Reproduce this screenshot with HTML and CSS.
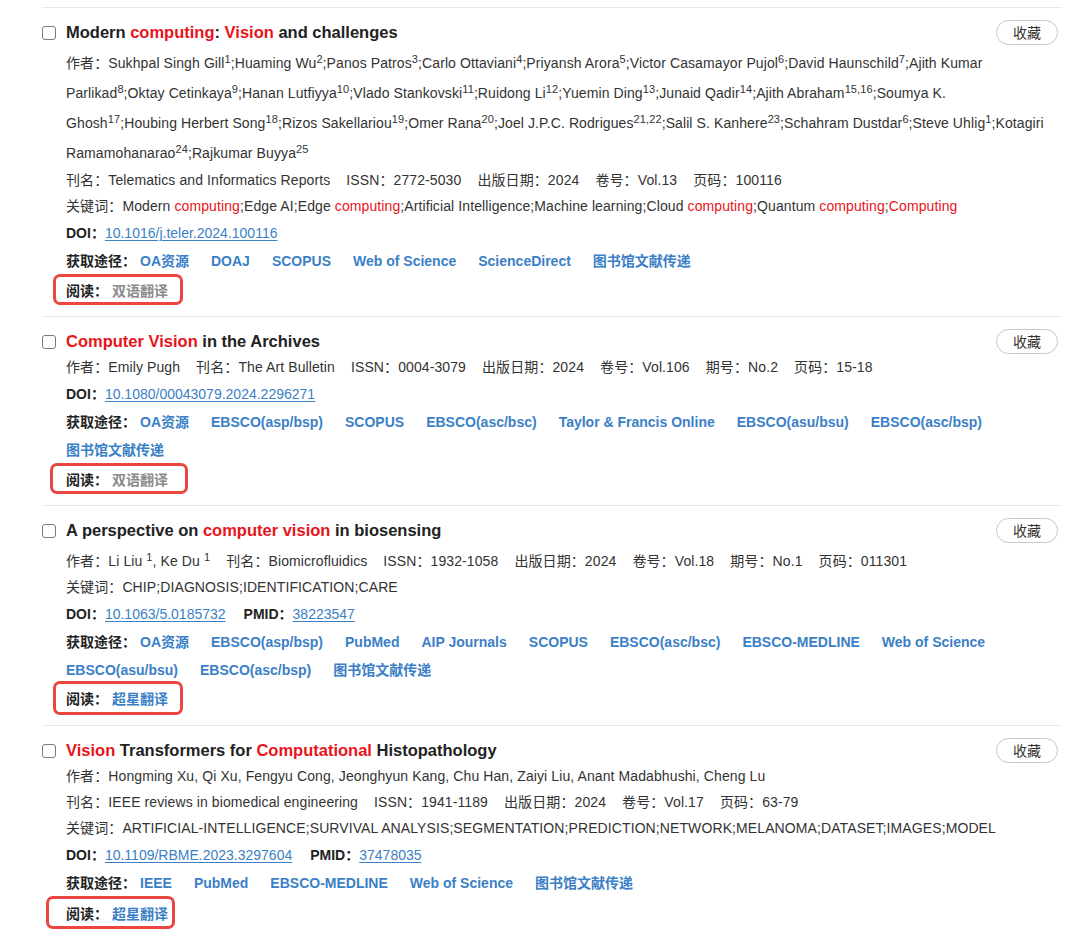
FILE: index.html
```html
<!DOCTYPE html>
<html lang="zh-CN">
<head>
<meta charset="utf-8">
<title>检索结果</title>
<link rel="stylesheet" href="styles.css">
</head>
<body>
<div class="results">

  <div class="record">
    <div class="head">
      <input type="checkbox" class="pick">
      <h3 class="title">Modern <em>computing</em>: <em>Vision</em> and challenges</h3>
      <button class="fav">收藏</button>
    </div>
    <div class="body">
      <p class="authors">作者：Sukhpal Singh Gill<sup>1</sup>;Huaming Wu<sup>2</sup>;Panos Patros<sup>3</sup>;Carlo Ottaviani<sup>4</sup>;Priyansh Arora<sup>5</sup>;Victor Casamayor Pujol<sup>6</sup>;David Haunschild<sup>7</sup>;Ajith Kumar Parlikad<sup>8</sup>;Oktay Cetinkaya<sup>9</sup>;Hanan Lutfiyya<sup>10</sup>;Vlado Stankovski<sup>11</sup>;Ruidong Li<sup>12</sup>;Yuemin Ding<sup>13</sup>;Junaid Qadir<sup>14</sup>;Ajith Abraham<sup>15,16</sup>;Soumya K. Ghosh<sup>17</sup>;Houbing Herbert Song<sup>18</sup>;Rizos Sakellariou<sup>19</sup>;Omer Rana<sup>20</sup>;Joel J.P.C. Rodrigues<sup>21,22</sup>;Salil S. Kanhere<sup>23</sup>;Schahram Dustdar<sup>6</sup>;Steve Uhlig<sup>1</sup>;Kotagiri Ramamohanarao<sup>24</sup>;Rajkumar Buyya<sup>25</sup></p>
      <div class="meta">
        <span>刊名：Telematics and Informatics Reports</span>
        <span>ISSN：2772-5030</span>
        <span>出版日期：2024</span>
        <span>卷号：Vol.13</span>
        <span>页码：100116</span>
      </div>
      <p class="line">关键词：Modern <em>computing</em>;Edge AI;Edge <em>computing</em>;Artificial Intelligence;Machine learning;Cloud <em>computing</em>;Quantum <em>computing</em>;<em>Computing</em></p>
      <div class="ids">
        <span class="id"><b>DOI：</b><a href="#">10.1016/j.teler.2024.100116</a></span>
      </div>
      <div class="sources">
        <b class="lbl">获取途径：</b>
        <a href="#">OA资源</a>
        <a href="#">DOAJ</a>
        <a href="#">SCOPUS</a>
        <a href="#">Web of Science</a>
        <a href="#">ScienceDirect</a>
        <a href="#">图书馆文献传递</a>
      </div>
      <div class="read mark-1"><b>阅读：</b><span class="off">双语翻译</span></div>
    </div>
  </div>

  <div class="record">
    <div class="head">
      <input type="checkbox" class="pick">
      <h3 class="title"><em>Computer Vision</em> in the Archives</h3>
      <button class="fav">收藏</button>
    </div>
    <div class="body">
      <div class="meta">
        <span>作者：Emily Pugh</span>
        <span>刊名：The Art Bulletin</span>
        <span>ISSN：0004-3079</span>
        <span>出版日期：2024</span>
        <span>卷号：Vol.106</span>
        <span>期号：No.2</span>
        <span>页码：15-18</span>
      </div>
      <div class="ids">
        <span class="id"><b>DOI：</b><a href="#">10.1080/00043079.2024.2296271</a></span>
      </div>
      <div class="sources">
        <b class="lbl">获取途径：</b>
        <a href="#">OA资源</a>
        <a href="#">EBSCO(asp/bsp)</a>
        <a href="#">SCOPUS</a>
        <a href="#">EBSCO(asc/bsc)</a>
        <a href="#">Taylor &amp; Francis Online</a>
        <a href="#">EBSCO(asu/bsu)</a>
        <a href="#">EBSCO(asc/bsp)</a>
        <a href="#">图书馆文献传递</a>
      </div>
      <div class="read mark-2"><b>阅读：</b><span class="off">双语翻译</span></div>
    </div>
  </div>

  <div class="record">
    <div class="head">
      <input type="checkbox" class="pick">
      <h3 class="title">A perspective on <em>computer vision</em> in biosensing</h3>
      <button class="fav">收藏</button>
    </div>
    <div class="body">
      <div class="meta with-sup">
        <span>作者：Li Liu <sup>1</sup>, Ke Du <sup>1</sup></span>
        <span>刊名：Biomicrofluidics</span>
        <span>ISSN：1932-1058</span>
        <span>出版日期：2024</span>
        <span>卷号：Vol.18</span>
        <span>期号：No.1</span>
        <span>页码：011301</span>
      </div>
      <p class="line">关键词：CHIP;DIAGNOSIS;IDENTIFICATION;CARE</p>
      <div class="ids">
        <span class="id"><b>DOI：</b><a href="#">10.1063/5.0185732</a></span>
        <span class="id"><b>PMID：</b><a href="#">38223547</a></span>
      </div>
      <div class="sources">
        <b class="lbl">获取途径：</b>
        <a href="#">OA资源</a>
        <a href="#">EBSCO(asp/bsp)</a>
        <a href="#">PubMed</a>
        <a href="#">AIP Journals</a>
        <a href="#">SCOPUS</a>
        <a href="#">EBSCO(asc/bsc)</a>
        <a href="#">EBSCO-MEDLINE</a>
        <a href="#">Web of Science</a>
        <a href="#">EBSCO(asu/bsu)</a>
        <a href="#">EBSCO(asc/bsp)</a>
        <a href="#">图书馆文献传递</a>
      </div>
      <div class="read mark-3"><b>阅读：</b><a href="#">超星翻译</a></div>
    </div>
  </div>

  <div class="record">
    <div class="head">
      <input type="checkbox" class="pick">
      <h3 class="title"><em>Vision</em> Transformers for <em>Computational</em> Histopathology</h3>
      <button class="fav">收藏</button>
    </div>
    <div class="body">
      <p class="line">作者：Hongming Xu, Qi Xu, Fengyu Cong, Jeonghyun Kang, Chu Han, Zaiyi Liu, Anant Madabhushi, Cheng Lu</p>
      <div class="meta">
        <span>刊名：IEEE reviews in biomedical engineering</span>
        <span>ISSN：1941-1189</span>
        <span>出版日期：2024</span>
        <span>卷号：Vol.17</span>
        <span>页码：63-79</span>
      </div>
      <p class="line">关键词：ARTIFICIAL-INTELLIGENCE;SURVIVAL ANALYSIS;SEGMENTATION;PREDICTION;NETWORK;MELANOMA;DATASET;IMAGES;MODEL</p>
      <div class="ids">
        <span class="id"><b>DOI：</b><a href="#">10.1109/RBME.2023.3297604</a></span>
        <span class="id"><b>PMID：</b><a href="#">37478035</a></span>
      </div>
      <div class="sources">
        <b class="lbl">获取途径：</b>
        <a href="#">IEEE</a>
        <a href="#">PubMed</a>
        <a href="#">EBSCO-MEDLINE</a>
        <a href="#">Web of Science</a>
        <a href="#">图书馆文献传递</a>
      </div>
      <div class="read mark-4"><b>阅读：</b><a href="#">超星翻译</a></div>
    </div>
  </div>

</div>
</body>
</html>
```

FILE: styles.css
```css
* { box-sizing: border-box; }

html, body {
  margin: 0;
  background: #fff;
}

body {
  font-family: "Liberation Sans", "Noto Sans CJK SC", sans-serif;
  font-size: 14px;
  color: #333;
}

.results {
  padding: 7px 18px 0 42px;
}

.record {
  border-top: 1px solid #e8e8e8;
  padding: 11px 0 13px;
}

/* title row: checkbox, title, favourite button */
.head {
  display: flex;
  align-items: center;
  height: 26px;
  padding-right: 4px;
}

.pick {
  appearance: none;
  -webkit-appearance: none;
  width: 14px;
  height: 14px;
  margin: 1px 10px 0 0;
  border: 1px solid #7a7a7a;
  border-radius: 3px;
  background: #fff;
  flex: none;
}

.title {
  margin: 0;
  flex: 1;
  font-size: 16.5px;
  font-weight: bold;
  color: #222;
  line-height: 26px;
}

.title em,
.line em {
  font-style: normal;
  color: #e8141a;
}

.fav {
  flex: none;
  width: 62px;
  height: 25px;
  border: 1px solid #c8c8c8;
  border-radius: 13px;
  background: #fff;
  font-family: inherit;
  font-size: 14px;
  color: #333;
  padding: 0;
}

.body {
  padding: 0 10px 0 24px;
}

sup {
  font-size: 11px;
  line-height: 0;
  vertical-align: baseline;
  position: relative;
  top: -0.5em;
}

/* long author list, wrapped over several lines */
.authors {
  margin: 0 0 -1px;
  padding-top: 3px;
  line-height: 30px;
  letter-spacing: 0.1px;
}

.line {
  margin: 0;
  line-height: 26px;
  letter-spacing: 0.1px;
}

.meta {
  display: flex;
  flex-wrap: wrap;
  column-gap: 16px;
  line-height: 26px;
  letter-spacing: 0.1px;
}

.meta.with-sup {
  padding-top: 5px;
}

.ids {
  display: flex;
  column-gap: 18px;
  line-height: 28px;
}

.ids b,
.sources .lbl,
.read b {
  color: #222;
  font-weight: bold;
}

.ids a {
  color: #3b7fc6;
  text-decoration: underline;
  text-underline-offset: 2px;
}

.sources {
  display: flex;
  flex-wrap: wrap;
  line-height: 28px;
}

.sources .lbl {
  margin-right: 4px;
}

.sources a {
  color: #3b7fc6;
  font-weight: bold;
  text-decoration: none;
  margin-right: 22px;
}

/* reading row, framed in red */
.read {
  display: flex;
  align-items: center;
  width: fit-content;
  height: 31px;
  border: 3px solid #e8463e;
  border-radius: 7px;
  margin: -1px 0 -2px -13px;
  padding: 0 12px 0 10px;
}

.read b {
  margin-right: 4px;
}

.read .off {
  color: #8a8a8a;
  font-weight: bold;
}

.read a {
  color: #3b7fc6;
  font-weight: bold;
  text-decoration: none;
}

.mark-2 {
  margin-left: -16px;
  padding-left: 13px;
  padding-right: 17px;
}

.mark-3 {
  height: 34px;
  margin-top: -3px;
  margin-bottom: -3px;
}

.mark-4 {
  height: 33px;
  margin-left: -20px;
  padding-left: 17px;
  padding-right: 4px;
}
```
